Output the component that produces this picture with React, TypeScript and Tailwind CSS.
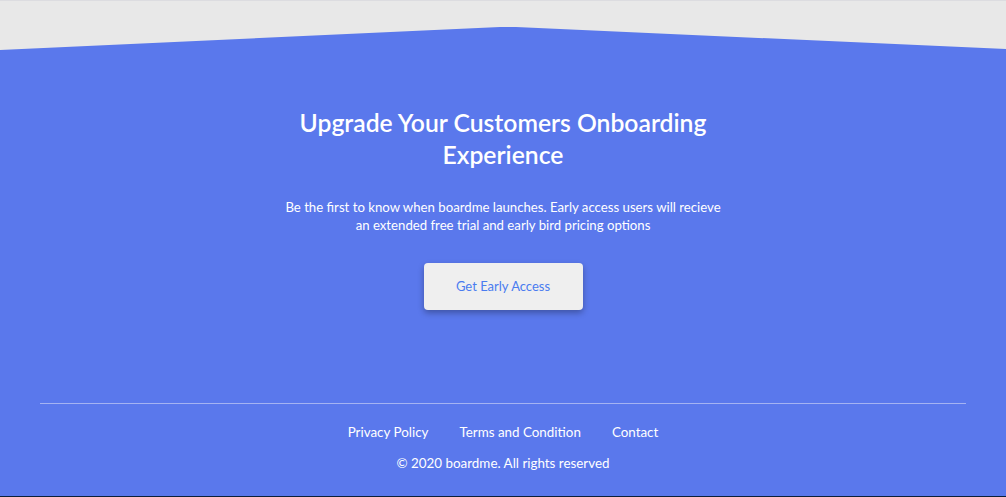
export default function App() {
  return (
    <div className="w-full h-[497px] flex flex-col bg-[#5a78ec] overflow-hidden" style={{ fontFamily: "Lato, 'Noto Sans', sans-serif" }}>
      <div className="h-[50px] shrink-0 bg-[#e8e8e8] border-t border-[#dcdce0] relative">
        <svg className="absolute inset-0 w-full h-full" viewBox="0 0 1006 49" preserveAspectRatio="none">
          <polygon points="0,49 500,26 516,26 1006,48 1006,49" fill="#5a78ec" />
        </svg>
      </div>
      <div className="flex-1 flex flex-col items-center">
        <h1 className="mt-[57px] text-[24.7px] leading-[32px] font-semibold text-white text-center w-[440px]">
          Upgrade Your Customers Onboarding Experience
        </h1>
        <p className="mt-[27px] text-[13.2px] leading-[18px] text-white text-center w-[452px]">
          Be the first to know when boardme launches. Early access users will recieve an extended free trial and early bird pricing options
        </p>
        <button className="mt-[29px] w-[159px] h-[47px] rounded-[4px] bg-[#efefef] text-[#4a7cf0] text-[13px] shadow-[0_3px_6px_rgba(0,0,0,0.3)]">
          Get Early Access
        </button>
        <div className="mt-[93px] w-full px-[40px]">
          <div className="h-px bg-[#a5b3f2]" />
        </div>
        <div className="mt-[18px] flex gap-[31px] text-[13.4px] text-white leading-[20px]">
          <span>Privacy Policy</span>
          <span>Terms and Condition</span>
          <span>Contact</span>
        </div>
        <div className="mt-[11px] text-[13.4px] text-white leading-[20px]">© 2020 boardme. All rights reserved</div>
      </div>
      <div className="h-px shrink-0 bg-[#0a1f3a]" />
    </div>
  );
}
